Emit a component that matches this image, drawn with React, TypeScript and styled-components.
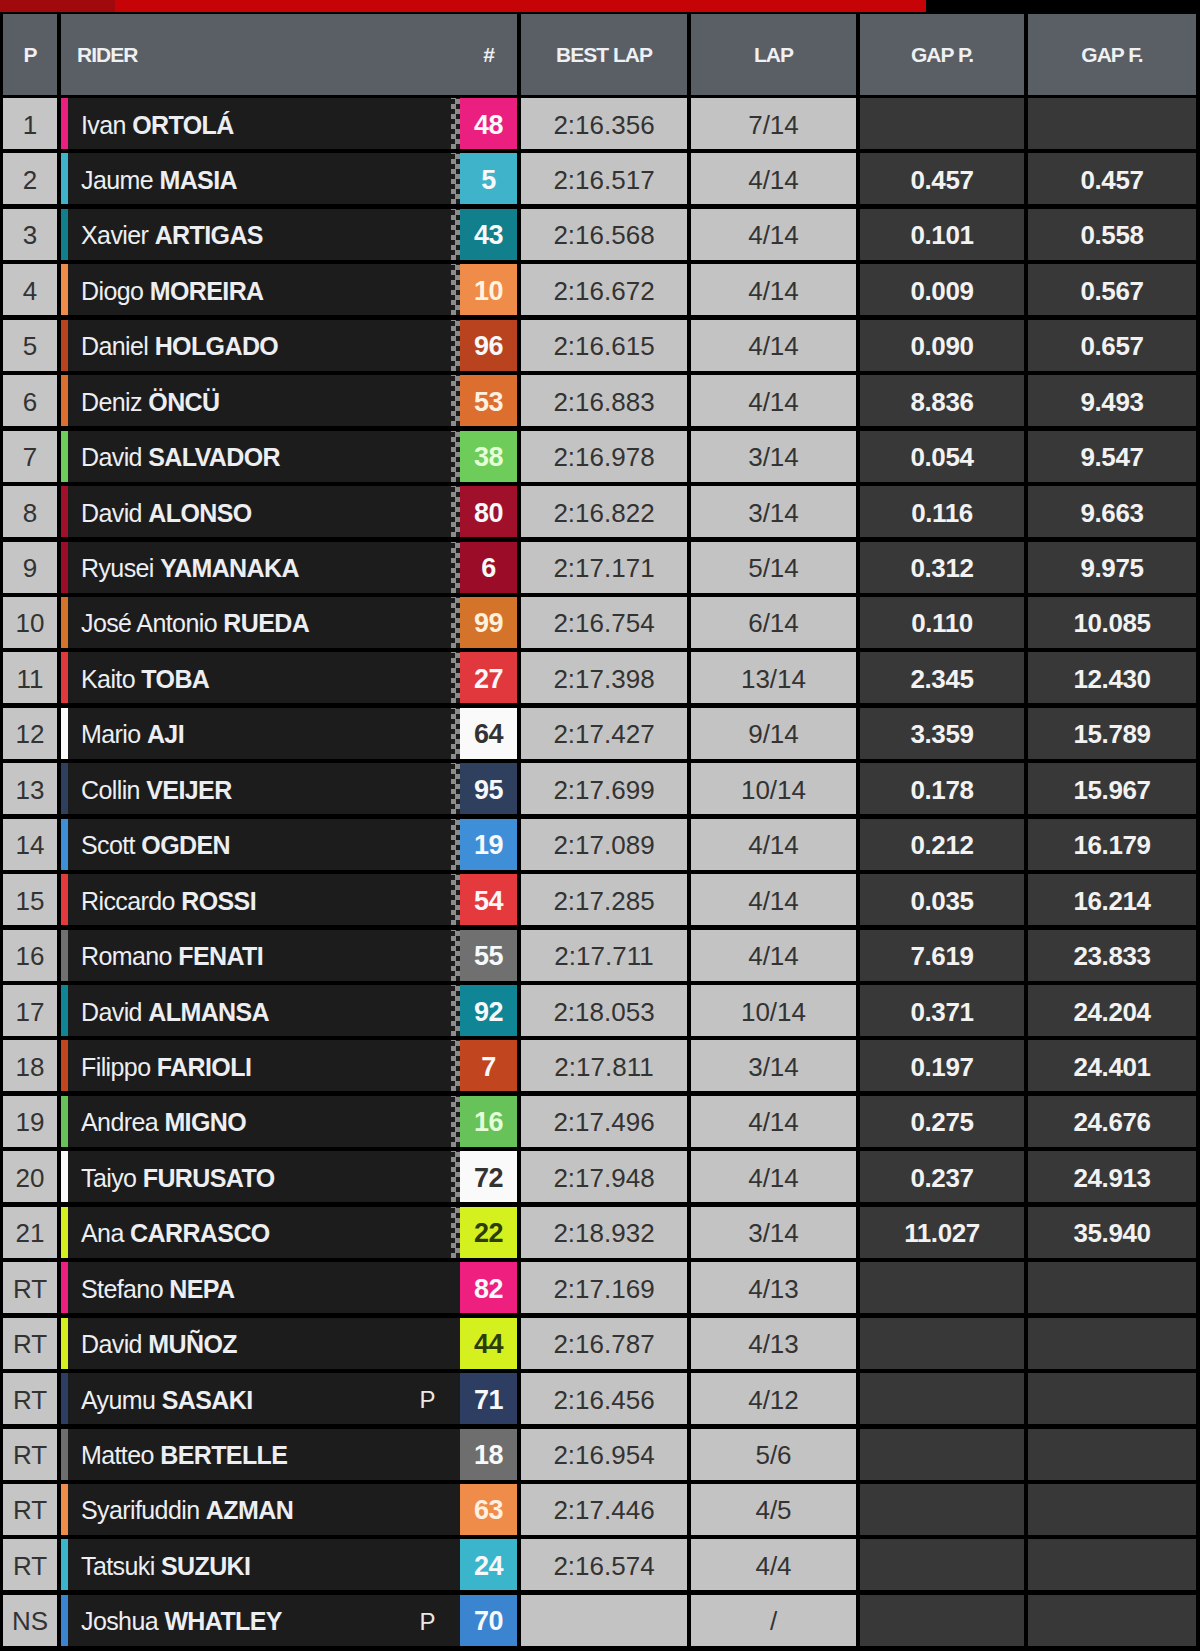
import React from "react";
import styled, { createGlobalStyle } from "styled-components";

const GlobalStyle = createGlobalStyle`
  html, body {
    margin: 0;
    padding: 0;
    background: #000;
  }
  body {
    font-family: "Liberation Sans", Arial, sans-serif;
  }
`

type Rider = {
  pos: string
  first: string
  last: string
  num: string
  color: string
  ink?: string
  best: string
  lap: string
  gapP?: string
  gapF?: string
  pit?: boolean
}

const riders: Rider[] = [
  { pos: "1", first: "Ivan", last: "ORTOLÁ", num: "48", color: "#ea1f7f", best: "2:16.356", lap: "7/14" },
  { pos: "2", first: "Jaume", last: "MASIA", num: "5", color: "#3fb3c9", best: "2:16.517", lap: "4/14", gapP: "0.457", gapF: "0.457" },
  { pos: "3", first: "Xavier", last: "ARTIGAS", num: "43", color: "#127f8c", best: "2:16.568", lap: "4/14", gapP: "0.101", gapF: "0.558" },
  { pos: "4", first: "Diogo", last: "MOREIRA", num: "10", color: "#f08c4a", ink: "#fff4e0", best: "2:16.672", lap: "4/14", gapP: "0.009", gapF: "0.567" },
  { pos: "5", first: "Daniel", last: "HOLGADO", num: "96", color: "#b9431f", best: "2:16.615", lap: "4/14", gapP: "0.090", gapF: "0.657" },
  { pos: "6", first: "Deniz", last: "ÖNCÜ", num: "53", color: "#dc6e30", ink: "#fff0e0", best: "2:16.883", lap: "4/14", gapP: "8.836", gapF: "9.493" },
  { pos: "7", first: "David", last: "SALVADOR", num: "38", color: "#6dcc5a", ink: "#e4ffd8", best: "2:16.978", lap: "3/14", gapP: "0.054", gapF: "9.547" },
  { pos: "8", first: "David", last: "ALONSO", num: "80", color: "#a0102a", best: "2:16.822", lap: "3/14", gapP: "0.116", gapF: "9.663" },
  { pos: "9", first: "Ryusei", last: "YAMANAKA", num: "6", color: "#9a0c28", best: "2:17.171", lap: "5/14", gapP: "0.312", gapF: "9.975" },
  { pos: "10", first: "José Antonio", last: "RUEDA", num: "99", color: "#d4742a", ink: "#fff0dc", best: "2:16.754", lap: "6/14", gapP: "0.110", gapF: "10.085" },
  { pos: "11", first: "Kaito", last: "TOBA", num: "27", color: "#e0383c", best: "2:17.398", lap: "13/14", gapP: "2.345", gapF: "12.430" },
  { pos: "12", first: "Mario", last: "AJI", num: "64", color: "#fafafa", ink: "#333", best: "2:17.427", lap: "9/14", gapP: "3.359", gapF: "15.789" },
  { pos: "13", first: "Collin", last: "VEIJER", num: "95", color: "#2f3f5e", best: "2:17.699", lap: "10/14", gapP: "0.178", gapF: "15.967" },
  { pos: "14", first: "Scott", last: "OGDEN", num: "19", color: "#3e8fd8", best: "2:17.089", lap: "4/14", gapP: "0.212", gapF: "16.179" },
  { pos: "15", first: "Riccardo", last: "ROSSI", num: "54", color: "#e43a3e", best: "2:17.285", lap: "4/14", gapP: "0.035", gapF: "16.214" },
  { pos: "16", first: "Romano", last: "FENATI", num: "55", color: "#707070", best: "2:17.711", lap: "4/14", gapP: "7.619", gapF: "23.833" },
  { pos: "17", first: "David", last: "ALMANSA", num: "92", color: "#0f8595", best: "2:18.053", lap: "10/14", gapP: "0.371", gapF: "24.204" },
  { pos: "18", first: "Filippo", last: "FARIOLI", num: "7", color: "#c1451f", best: "2:17.811", lap: "3/14", gapP: "0.197", gapF: "24.401" },
  { pos: "19", first: "Andrea", last: "MIGNO", num: "16", color: "#67c25a", ink: "#e4ffd8", best: "2:17.496", lap: "4/14", gapP: "0.275", gapF: "24.676" },
  { pos: "20", first: "Taiyo", last: "FURUSATO", num: "72", color: "#fafafa", ink: "#333", best: "2:17.948", lap: "4/14", gapP: "0.237", gapF: "24.913" },
  { pos: "21", first: "Ana", last: "CARRASCO", num: "22", color: "#d4f01e", ink: "#2c3d0a", best: "2:18.932", lap: "3/14", gapP: "11.027", gapF: "35.940" },
  { pos: "RT", first: "Stefano", last: "NEPA", num: "82", color: "#ee1f7f", best: "2:17.169", lap: "4/13" },
  { pos: "RT", first: "David", last: "MUÑOZ", num: "44", color: "#d4f01e", ink: "#2c3d0a", best: "2:16.787", lap: "4/13" },
  { pos: "RT", first: "Ayumu", last: "SASAKI", num: "71", color: "#2e3d62", best: "2:16.456", lap: "4/12", pit: true },
  { pos: "RT", first: "Matteo", last: "BERTELLE", num: "18", color: "#6e6e6e", best: "2:16.954", lap: "5/6" },
  { pos: "RT", first: "Syarifuddin", last: "AZMAN", num: "63", color: "#f08c4a", ink: "#fff0e0", best: "2:17.446", lap: "4/5" },
  { pos: "RT", first: "Tatsuki", last: "SUZUKI", num: "24", color: "#3ab5cc", best: "2:16.574", lap: "4/4" },
  { pos: "NS", first: "Joshua", last: "WHATLEY", num: "70", color: "#3a84d0", best: "", lap: "/", pit: true },
]

const Page = styled.div`
  width: 1200px;
  height: 1651px;
  background: #000;
  overflow: hidden;
`

const TopBar = styled.div`
  height: 12px;
  margin-bottom: 2px;
  display: flex;
`

const RedFill = styled.div`
  width: 926px;
  background: linear-gradient(to right, #a00a0c 0, #a00a0c 115px, #c60306 115px);
`

const Grid = styled.div`
  display: grid;
  grid-template-columns: 54px 456px 166px 165px 164px 168px;
  column-gap: 4px;
  padding-left: 3px;
`

const HeaderRow = styled(Grid)`
  height: 81px;
  margin-bottom: 3px;
`

const HeaderCell = styled.div<{ $align?: "left" | "center" }>`
  background: #5a5e65;
  color: #eef0f2;
  font-size: 21px;
  font-weight: bold;
  letter-spacing: -1px;
  display: flex;
  align-items: center;
  justify-content: ${p => (p.$align === "left" ? "space-between" : "center")};
  padding-left: ${p => (p.$align === "left" ? "16px" : "0")};
`

const HashLabel = styled.span`
  width: 57px;
  text-align: center;
`

const Rows = styled.div`
  display: flex;
  flex-direction: column;
  gap: 4.45px;
`

const Row = styled(Grid)`
  height: 51px;
`

const PosCell = styled.div`
  background: #c5c5c5;
  color: #333;
  font-size: 26px;
  padding-top: 3px;
  display: flex;
  align-items: center;
  justify-content: center;
`

const RiderCell = styled.div<{ $color: string }>`
  background: #1c1c1c;
  border-left: 7px solid ${p => p.$color};
  display: flex;
  align-items: center;
  color: #eceef2;
  font-size: 25px;
  letter-spacing: -0.6px;
`

const Name = styled.div`
  flex: 1;
  padding: 3px 0 0 13px;
  white-space: nowrap;
`

const LastName = styled.span`
  font-weight: bold;
`

const PitMark = styled.span`
  font-size: 24px;
  color: #e8e8e8;
  margin-right: 16px;
  padding-top: 3px;
`

const Flag = styled.div<{ $show: boolean }>`
  width: 9px;
  align-self: stretch;
  background: ${p =>
    p.$show
      ? "repeating-conic-gradient(#8c8c8c 0 25%, transparent 0 50%) 0 1px / 9px 10px"
      : "none"};
`

const NumBox = styled.div<{ $bg: string; $ink: string }>`
  width: 57px;
  align-self: stretch;
  background: ${p => p.$bg};
  color: ${p => p.$ink};
  font-weight: bold;
  font-size: 27px;
  letter-spacing: -0.5px;
  padding-top: 3px;
  display: flex;
  align-items: center;
  justify-content: center;
`

const LightCell = styled.div`
  background: #c3c3c3;
  color: #333;
  font-size: 26px;
  padding-top: 3px;
  display: flex;
  align-items: center;
  justify-content: center;
`

const GapCell = styled.div`
  background: #383838;
  color: #f2f2f2;
  font-weight: bold;
  font-size: 26px;
  letter-spacing: -0.4px;
  padding-top: 3px;
  display: flex;
  align-items: center;
  justify-content: center;
`

const App = () => {
  return (
    <Page>
      <GlobalStyle />
      <TopBar>
        <RedFill />
      </TopBar>
      <HeaderRow>
        <HeaderCell>P</HeaderCell>
        <HeaderCell $align="left">
          <span>RIDER</span>
          <HashLabel>#</HashLabel>
        </HeaderCell>
        <HeaderCell>BEST LAP</HeaderCell>
        <HeaderCell>LAP</HeaderCell>
        <HeaderCell>GAP P.</HeaderCell>
        <HeaderCell>GAP F.</HeaderCell>
      </HeaderRow>
      <Rows>
        {riders.map(r => {
          const finished = !isNaN(Number(r.pos))
          return (
            <Row key={r.num}>
              <PosCell>{r.pos}</PosCell>
              <RiderCell $color={r.color}>
                <Name>
                  {r.first} <LastName>{r.last}</LastName>
                </Name>
                {r.pit && <PitMark>P</PitMark>}
                <Flag $show={finished} />
                <NumBox $bg={r.color} $ink={r.ink || "#f6f8fa"}>
                  {r.num}
                </NumBox>
              </RiderCell>
              <LightCell>{r.best}</LightCell>
              <LightCell>{r.lap}</LightCell>
              <GapCell>{r.gapP}</GapCell>
              <GapCell>{r.gapF}</GapCell>
            </Row>
          )
        })}
      </Rows>
    </Page>
  )
}

export default App
